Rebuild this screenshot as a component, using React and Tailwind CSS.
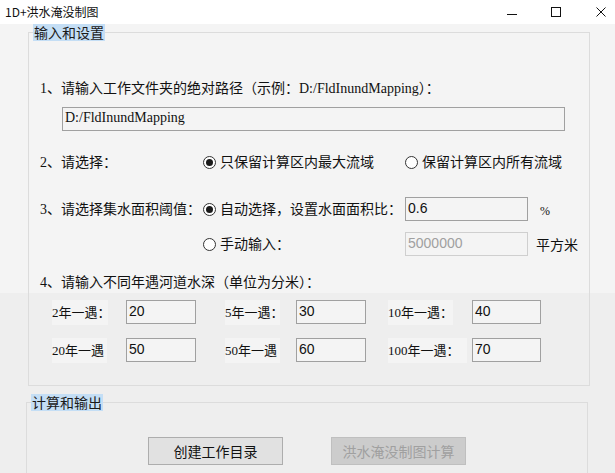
import React from 'react';

const Radio = ({ checked }) => (
  <span className="flex items-center justify-center w-[13px] h-[13px] rounded-full border border-[#333] bg-white shrink-0">
    {checked && <span className="w-[7px] h-[7px] rounded-full bg-[#1a1a1a]" />}
  </span>
);

const Field = ({ value, width, disabled }) => (
  <div
    className={`h-[24px] border bg-[#f4f4f4] pl-[2px] pt-[2px] leading-[16px] text-[14px] font-['Liberation_Sans','Noto_Sans_CJK_SC',sans-serif] ${
      disabled ? 'border-[#cfcfcf] text-[#a0a0a0]' : 'border-[#a0a0a0] text-[#111]'
    }`}
    style={{ width }}
  >
    {value}
  </div>
);

const DepthLabel = ({ text, box, slot }) => (
  <div className="h-[25px] shrink-0" style={{ width: slot }}>
    <div
      className="h-[25px] flex items-center bg-[#f4f4f4] text-[13px] whitespace-nowrap"
      style={{ width: box }}
    >
      {text}
    </div>
  </div>
);

const GroupTitle = ({ children }) => (
  <div className="absolute left-[4px] top-[-9px] h-[17px] leading-[17px] px-[1px] bg-[#c4def5] text-[14px] text-[#1a1a1a] font-['Noto_Sans_CJK_SC',sans-serif]">
    {children}
  </div>
);

export default function App() {
  return (
    <div className="w-[615px] h-[473px] overflow-hidden bg-white text-[#111] font-['Liberation_Serif','Noto_Sans_CJK_SC',serif]">
      {/* Title bar */}
      <div className="h-[24px] flex items-center justify-between pl-[5px] pr-[9px] bg-white">
        <span className="text-[12px] leading-[16px] text-[#111] font-['Noto_Sans_CJK_SC',sans-serif]">1D+洪水淹没制图</span>
        <div className="flex items-center">
          <svg width="10" height="10" viewBox="0 0 10 10" className="mt-[2px]">
            <line x1="0" y1="6.5" x2="10" y2="6.5" stroke="#111" strokeWidth="1" />
          </svg>
          <svg width="10" height="10" viewBox="0 0 10 10" className="ml-[34px]">
            <rect x="0.5" y="0.5" width="9" height="9" fill="none" stroke="#111" strokeWidth="1" />
          </svg>
          <svg width="10" height="10" viewBox="0 0 10 10" className="ml-[35px]">
            <path d="M0.5 0.5 L9.5 9.5 M9.5 0.5 L0.5 9.5" stroke="#111" strokeWidth="1" />
          </svg>
        </div>
      </div>

      {/* Body */}
      <div className="h-[449px] pt-[8px] bg-[linear-gradient(to_bottom,#f4f4f4_269px,#eeeeee_269px)]">
        {/* 输入和设置 */}
        <div className="relative ml-[28px] w-[562px] h-[354px] border border-[#dcdcdc]">
          <GroupTitle>输入和设置</GroupTitle>

          <div className="mt-[46px] pl-[11px] h-[20px] leading-[20px] text-[14px] whitespace-nowrap">
            1、请输入工作文件夹的绝对路径（示例：D:/FldInundMapping）：
          </div>
          <div className="mt-[8px] ml-[33px] w-[503px] h-[24px] border border-[#a0a0a0] bg-[#f4f4f4] pl-[2px] pt-[1px] leading-[18px] text-[14px]">
            D:/FldInundMapping
          </div>

          <div className="mt-[21px] pl-[11px] h-[20px] flex items-center text-[14px]">
            <div className="w-[163px]">2、请选择：</div>
            <div className="w-[202px] flex items-center gap-[4px]">
              <Radio checked />
              <span>只保留计算区内最大流域</span>
            </div>
            <div className="flex items-center gap-[4px]">
              <Radio />
              <span>保留计算区内所有流域</span>
            </div>
          </div>

          <div className="mt-[25px] pl-[11px] h-[24px] flex items-center text-[14px]">
            <div className="w-[163px] whitespace-nowrap">3、请选择集水面积阈值：</div>
            <div className="w-[202px] flex items-center gap-[4px] whitespace-nowrap">
              <Radio checked />
              <span>自动选择，设置水面面积比：</span>
            </div>
            <Field value="0.6" width={123} />
            <span className="ml-[12px] mt-[4px] text-[12px]">%</span>
          </div>

          <div className="mt-[11px] pl-[174px] h-[24px] flex items-center text-[14px]">
            <div className="w-[202px] flex items-center gap-[4px]">
              <Radio />
              <span>手动输入：</span>
            </div>
            <Field value="5000000" width={123} disabled />
            <span className="ml-[8px] mt-[2px]">平方米</span>
          </div>

          <div className="mt-[17px] pl-[11px] h-[20px] leading-[20px] text-[14px] whitespace-nowrap">
            4、请输入不同年遇河道水深（单位为分米）：
          </div>

          <div className="mt-[7px] pl-[23px] flex items-start">
            <DepthLabel text="2年一遇：" box={56} slot={74} />
            <Field value="20" width={70} />
            <div className="ml-[29px] flex items-start">
              <DepthLabel text="5年一遇：" box={55} slot={71} />
              <Field value="30" width={70} />
            </div>
            <div className="ml-[22px] flex items-start">
              <DepthLabel text="10年一遇：" box={65} slot={84} />
              <Field value="40" width={69} />
            </div>
          </div>

          <div className="mt-[13px] pl-[23px] flex items-start">
            <DepthLabel text="20年一遇" box={55} slot={74} />
            <Field value="50" width={70} />
            <div className="ml-[29px] flex items-start">
              <DepthLabel text="50年一遇" box={55} slot={71} />
              <Field value="60" width={70} />
            </div>
            <div className="ml-[22px] flex items-start">
              <DepthLabel text="100年一遇：" box={79} slot={84} />
              <Field value="70" width={69} />
            </div>
          </div>
        </div>

        {/* 计算和输出 */}
        <div className="relative mt-[16px] ml-[26px] w-[562px] h-[90px] border border-[#dcdcdc]">
          <GroupTitle>计算和输出</GroupTitle>
          <div className="mt-[34px] ml-[121px] flex items-center gap-[48px] font-['Noto_Sans_CJK_SC',sans-serif] text-[14px]">
            <button className="w-[135px] h-[28px] border border-[#adadad] bg-[#e1e1e1] text-[#111] leading-[26px]">
              创建工作目录
            </button>
            <button disabled className="w-[135px] h-[28px] border border-[#bfbfbf] bg-[#cccccc] text-[#a0a0a0] leading-[26px]">
              洪水淹没制图计算
            </button>
          </div>
        </div>
      </div>
    </div>
  );
}
